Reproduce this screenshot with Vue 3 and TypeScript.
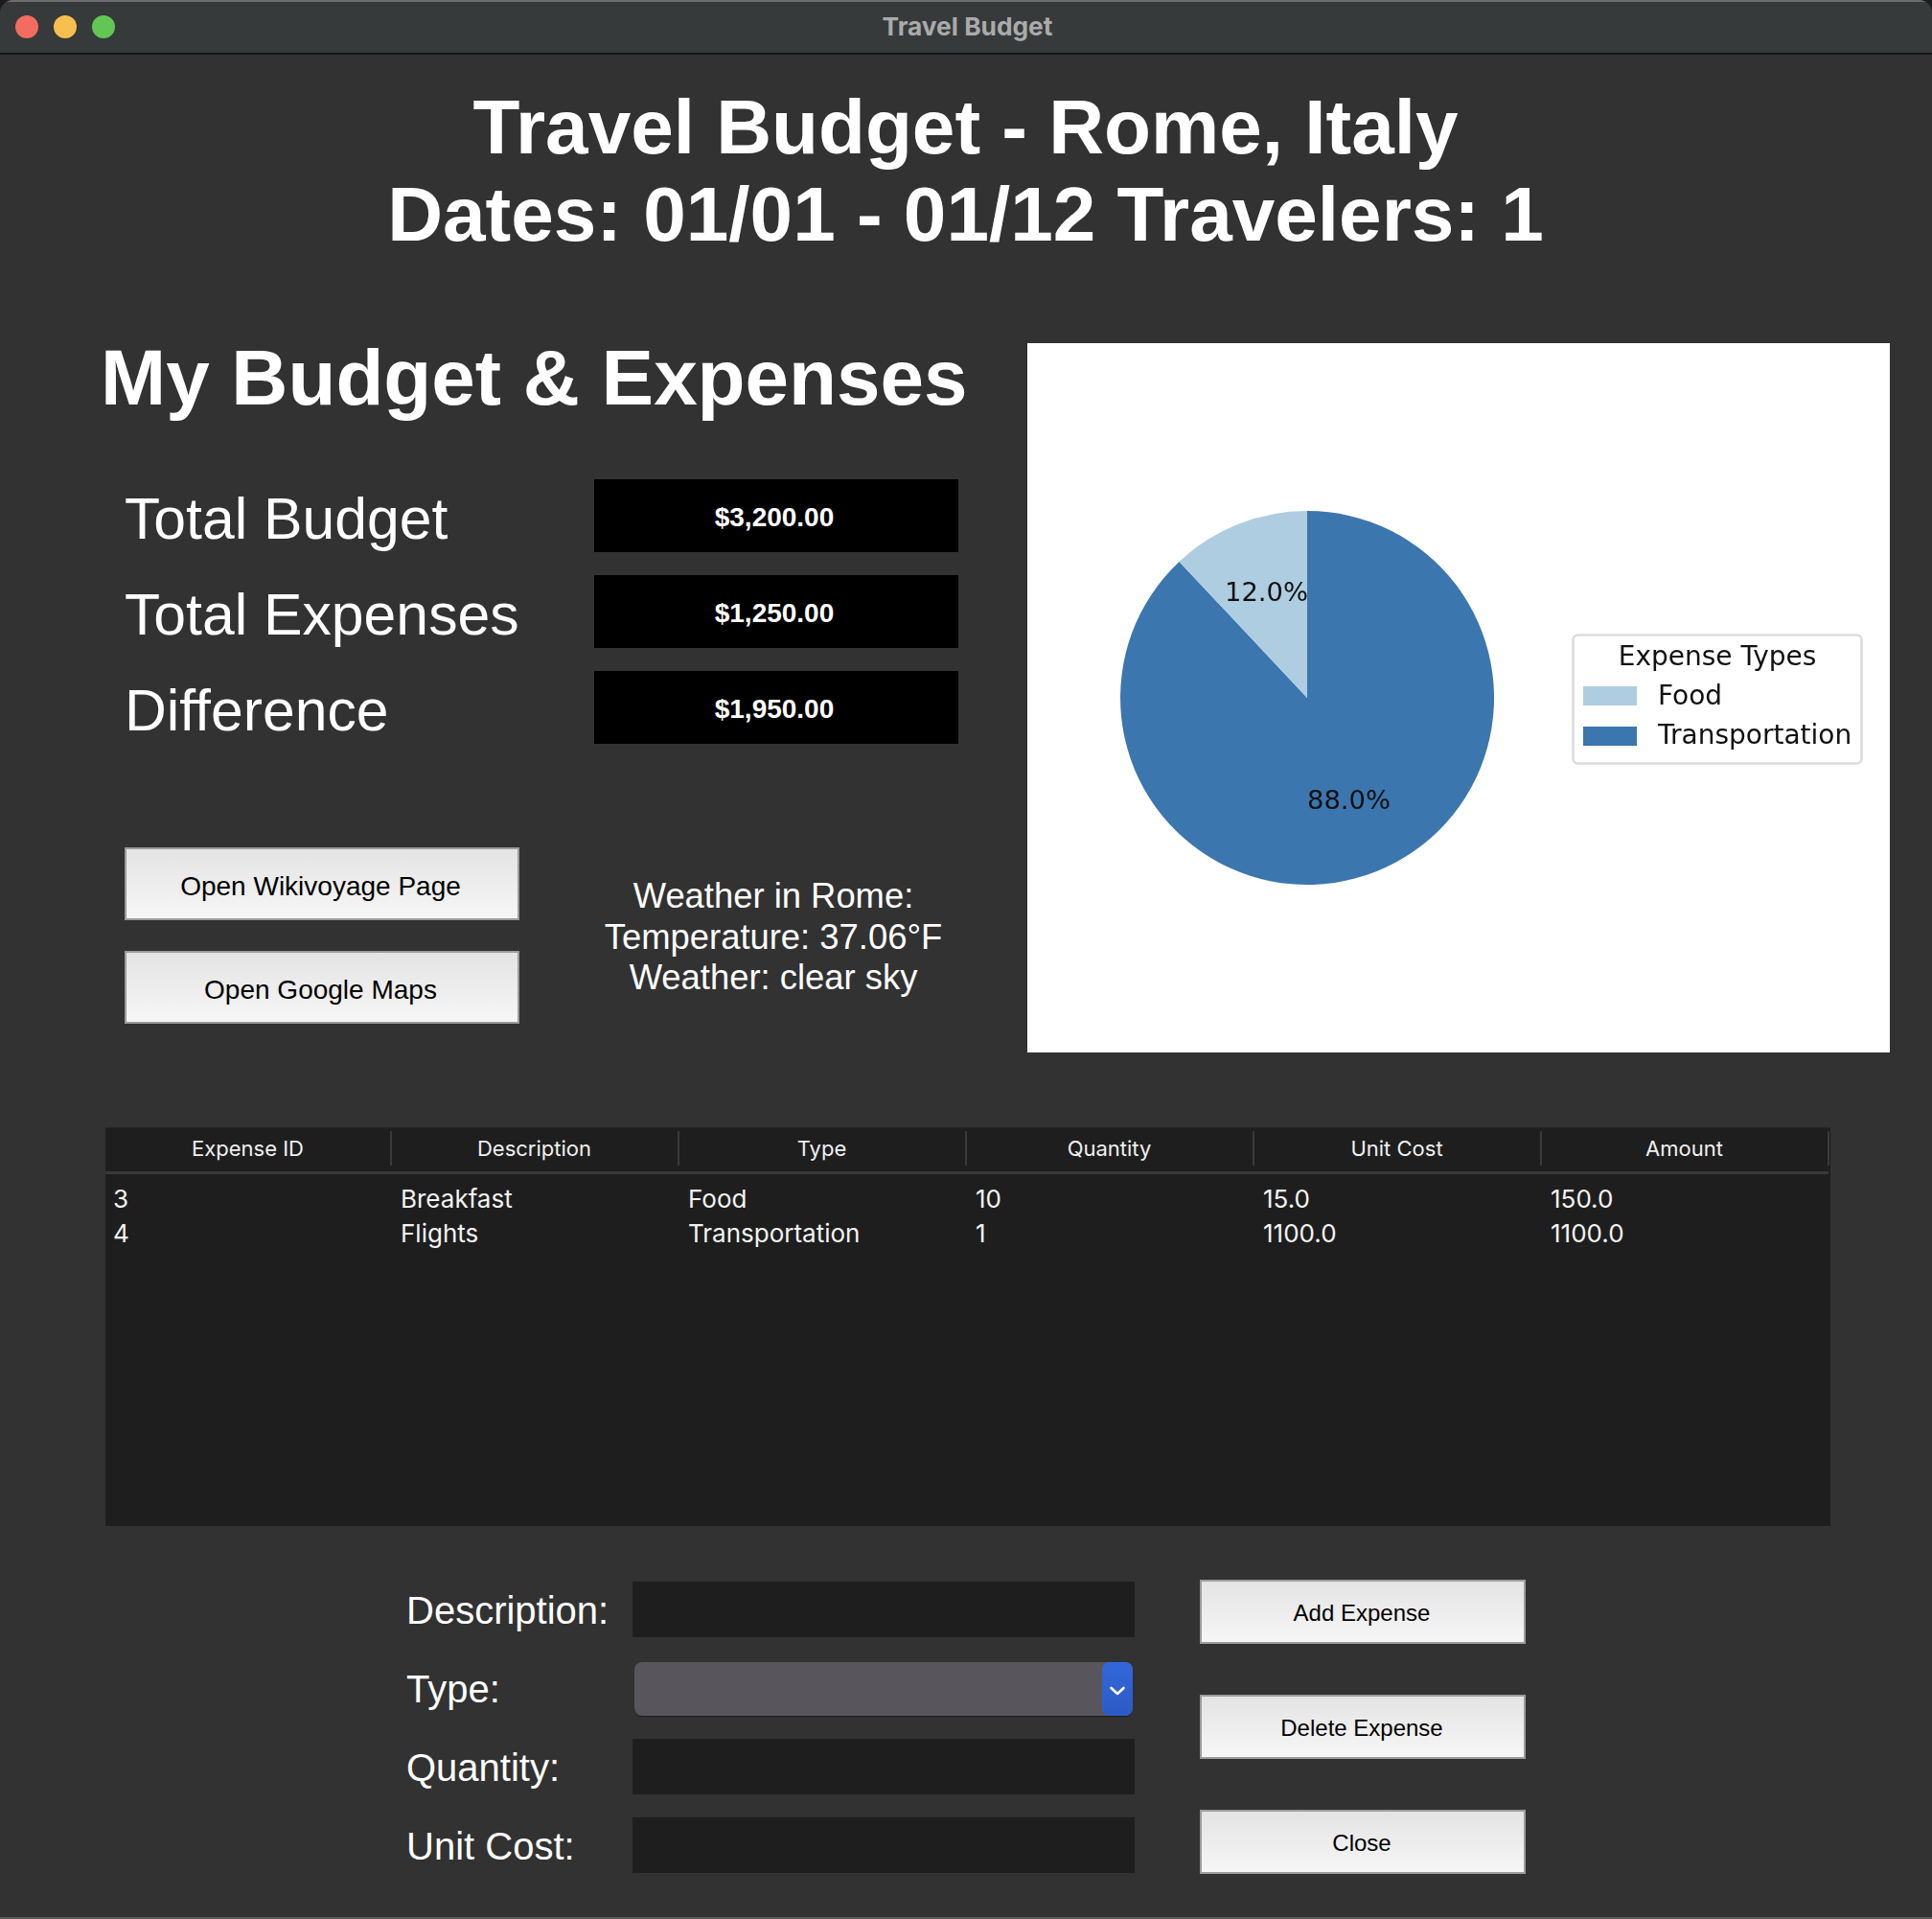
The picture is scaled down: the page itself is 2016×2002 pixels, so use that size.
<script setup lang="ts">
interface Expense { id: number; description: string; type: string; quantity: number; unitCost: string; amount: string }

const stats = [
  { label: 'Total Budget', value: '$3,200.00' },
  { label: 'Total Expenses', value: '$1,250.00' },
  { label: 'Difference', value: '$1,950.00' },
]
const columns = ['Expense ID', 'Description', 'Type', 'Quantity', 'Unit Cost', 'Amount']
const expenses: Expense[] = [
  { id: 3, description: 'Breakfast', type: 'Food', quantity: 10, unitCost: '15.0', amount: '150.0' },
  { id: 4, description: 'Flights', type: 'Transportation', quantity: 1, unitCost: '1100.0', amount: '1100.0' },
]
</script>

<template>
  <div class="window">
    <header class="titlebar">
      <div class="lights">
        <span class="light red"></span>
        <span class="light yellow"></span>
        <span class="light green"></span>
      </div>
      <span class="window-title">Travel Budget</span>
    </header>

    <div class="heading">
      <div>Travel Budget - Rome, Italy</div>
      <div>Dates: 01/01 - 01/12 Travelers: 1</div>
    </div>

    <section class="top">
      <div class="left">
        <h2 class="subhead">My Budget &amp; Expenses</h2>
        <div class="stats">
          <template v-for="s in stats" :key="s.label">
            <div class="stat-label">{{ s.label }}</div>
            <div class="stat-value"><span>{{ s.value }}</span></div>
          </template>
        </div>
        <div class="lower">
          <div class="link-buttons">
            <button class="btn link-btn">Open Wikivoyage Page</button>
            <button class="btn link-btn">Open Google Maps</button>
          </div>
          <div class="weather">
            <div>Weather in Rome:</div>
            <div>Temperature: 37.06°F</div>
            <div>Weather: clear sky</div>
          </div>
        </div>
      </div>
      <div class="chart">
        <svg width="900" height="740" viewBox="0 0 900 740">
          <path d="M292 370 L292 175 A195 195 0 1 1 158.5 227.9 Z" fill="#3c76af" />
          <path d="M292 370 L158.5 227.9 A195 195 0 0 1 292 175 Z" fill="#aecde1" />
          <text x="206" y="269" class="pie-text">12.0%</text>
          <text x="292" y="486" class="pie-text">88.0%</text>
          <rect x="569.5" y="304.5" width="301" height="134" rx="5" fill="#fff" stroke="#dcdcdc" stroke-width="2.5" />
          <text x="720" y="336" text-anchor="middle" class="legend-text">Expense Types</text>
          <rect x="580" y="358" width="56" height="20" fill="#aecde1" />
          <rect x="580" y="400" width="56" height="20" fill="#3c76af" />
          <text x="658" y="377" class="legend-text">Food</text>
          <text x="658" y="418" class="legend-text">Transportation</text>
        </svg>
      </div>
    </section>

    <section class="table-wrap">
      <table class="expenses">
        <colgroup>
          <col class="col-first" />
          <col v-for="n in 5" :key="n" class="col-rest" />
        </colgroup>
        <thead>
          <tr>
            <th v-for="c in columns" :key="c"><span class="th-inner">{{ c }}</span></th>
          </tr>
        </thead>
        <tbody>
          <tr v-for="e in expenses" :key="e.id">
            <td>{{ e.id }}</td>
            <td>{{ e.description }}</td>
            <td>{{ e.type }}</td>
            <td>{{ e.quantity }}</td>
            <td>{{ e.unitCost }}</td>
            <td>{{ e.amount }}</td>
          </tr>
        </tbody>
      </table>
    </section>

    <section class="form-area">
      <div class="fields">
        <label class="field-label">Description:</label>
        <input class="field-input" type="text" />
        <label class="field-label">Type:</label>
        <div class="select">
          <span class="select-arrow">
            <svg width="18" height="12" viewBox="0 0 18 12">
              <path d="M2.5 3 L9 9 L15.5 3" fill="none" stroke="#fff" stroke-width="2.6" stroke-linecap="round" stroke-linejoin="round" />
            </svg>
          </span>
        </div>
        <label class="field-label">Quantity:</label>
        <input class="field-input" type="text" />
        <label class="field-label">Unit Cost:</label>
        <input class="field-input" type="text" />
      </div>
      <div class="actions">
        <button class="btn action-btn">Add Expense</button>
        <button class="btn action-btn">Delete Expense</button>
        <button class="btn action-btn">Close</button>
      </div>
    </section>
  </div>
</template>

<style>
html, body { margin: 0; background: #1c1c1c; }
</style>

<style scoped>
.window {
  width: 2016px;
  height: 2002px;
  box-sizing: border-box;
  background: #323232;
  border-radius: 14px 14px 0 0;
  border-bottom: 2px solid #5a5a5a;
  overflow: hidden;
  font-family: "Liberation Sans", Arial, sans-serif;
  color: #fff;
}
.titlebar {
  position: relative;
  height: 57px;
  box-sizing: border-box;
  background: #373a3b;
  border-top: 2px solid #6d6d6d;
  border-bottom: 2px solid #141414;
  display: flex;
  align-items: center;
  justify-content: center;
  padding-bottom: 3px;
}
.lights {
  position: absolute;
  left: 16px;
  top: 14px;
  display: flex;
  gap: 16px;
}
.light { width: 24px; height: 24px; border-radius: 50%; }
.red { background: #f46b5f; }
.yellow { background: #f6bf4f; }
.green { background: #62c655; }
.window-title {
  font-family: Inter, "Liberation Sans", sans-serif;
  font-size: 26.3px;
  font-weight: 700;
  color: #a9abab;
  margin-left: 3px;
}
.heading {
  margin-top: 30px;
  text-align: center;
  font-size: 80.1px;
  font-weight: 700;
  line-height: 91px;
  margin-right: 1px;
}
.top {
  margin-top: 89px;
  display: flex;
}
.left { width: 1072px; flex: none; padding-left: 105px; box-sizing: border-box; }
.subhead {
  margin: 0;
  font-size: 81.8px;
  font-weight: 700;
  line-height: 72px;
  white-space: nowrap;
}
.stats {
  margin-top: 70px;
  margin-left: 26px;
  display: grid;
  grid-template-columns: 489px 380px;
  grid-auto-rows: 76px;
  row-gap: 24px;
}
.stat-label { font-size: 60.7px; line-height: 82px; margin-left: -1px; }
.stat-value {
  background: #000;
  font-size: 28px;
  font-weight: 700;
  display: flex;
  align-items: center;
  justify-content: center;
}
.stat-value span { position: relative; left: -2px; top: 2px; }
.lower {
  margin-top: 108px;
  margin-left: 25px;
  display: flex;
}
.link-buttons { display: flex; flex-direction: column; gap: 32px; }
.btn {
  box-sizing: border-box;
  background: linear-gradient(#e4e4e4, #f6f6f6);
  border: 2px solid #9c9c9c;
  color: #000;
  font-family: "Liberation Sans", Arial, sans-serif;
  padding: 0;
}
.link-btn { width: 412px; height: 76px; font-size: 28px; padding: 5px 3px 0 0; }
.weather {
  width: 380px;
  margin-left: 75px;
  margin-top: 30px;
  text-align: center;
  font-size: 36.4px;
  line-height: 42.5px;
}
.chart { width: 900px; height: 740px; flex: none; background: #fff; }
.chart svg { display: block; filter: blur(0.4px); }
.pie-text { font-family: "DejaVu Sans", sans-serif; font-size: 27.4px; fill: #111; }
.legend-text { font-family: "DejaVu Sans", sans-serif; font-size: 28px; fill: #111; }
.table-wrap {
  margin: 78px 0 0 110px;
  width: 1800px;
  height: 415px;
  background: #1e1e1e;
  border-top: 1px solid #262626;
}
.expenses {
  border-collapse: collapse;
  table-layout: fixed;
  width: 1798px;
  font-family: Inter, "Liberation Sans", sans-serif;
}
.col-first { width: 298px; }
.col-rest { width: 300px; }
.expenses th {
  height: 41px;
  padding: 0 0 4px;
  border-bottom: 3px solid #383838;
  font-size: 22px;
  font-weight: 400;
  color: #f0f0f0;
}
.th-inner {
  display: block;
  line-height: 36px;
  border-right: 2px solid #3a3a3a;
  margin-right: -1px;
}
.expenses td {
  height: 36px;
  padding: 0 0 0 10px;
  font-size: 26px;
  color: #f4f4f4;
}
.expenses td:first-child { padding-left: 8px; }
.expenses tbody tr:first-child td { padding-top: 7px; }
.form-area {
  margin: 56px 0 0 424px;
  display: flex;
  align-items: flex-start;
}
.fields {
  display: grid;
  grid-template-columns: 236px 524px;
  grid-auto-rows: 58px;
  row-gap: 24px;
  margin-top: 2px;
}
.field-label { font-size: 40px; line-height: 60px; }
.field-input {
  background: #1e1e1e;
  border: 0;
  padding: 0;
  outline: 0;
  margin: 0;
  display: block;
  width: 100%;
  height: 58px;
}
.select {
  position: relative;
  margin: 2px 2px 0;
  height: 56px;
  background: #58565c;
  border-radius: 8px;
  box-shadow: 0 1px 1px #1c1c1c;
}
.select-arrow {
  position: absolute;
  top: 0;
  right: 0;
  width: 32px;
  height: 56px;
  border-radius: 8px;
  background: linear-gradient(#3367d9, #2c5bc6);
  display: flex;
  align-items: center;
  justify-content: center;
}
.select-arrow svg { position: relative; top: 2px; }
.actions {
  margin-left: 68px;
  height: 307px;
  display: flex;
  flex-direction: column;
  justify-content: space-between;
}
.action-btn { width: 340px; height: 67px; font-size: 24px; padding: 2px 2px 0 0; }
</style>
